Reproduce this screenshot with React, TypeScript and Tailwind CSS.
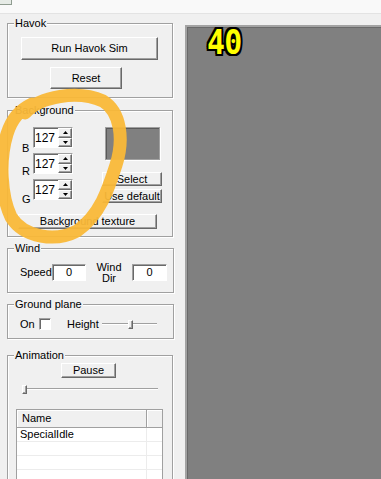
import React from "react";

const btn =
  "flex items-center justify-center border border-t-white border-l-white border-r-[#696969] border-b-[#696969] bg-[#f0f0f0] shadow-[inset_-1px_-1px_0_#a0a0a0] text-[11px] leading-none text-black";
const sunken =
  "border border-t-[#a0a0a0] border-l-[#a0a0a0] border-r-white border-b-white shadow-[inset_1px_1px_0_#696969] bg-white";

function Group({ label, className, children }: { label: string; className?: string; children: React.ReactNode }) {
  return (
    <div className={`relative border border-[#a0a0a0] shadow-[inset_1px_1px_0_#fff,1px_1px_0_#fff] ${className ?? ""}`}>
      <span className="absolute -top-[7px] left-[6px] bg-[#f0f0f0] px-[1px] leading-[13px]">{label}</span>
      {children}
    </div>
  );
}

function Arrow({ up }: { up?: boolean }) {
  return (
    <svg width="5" height="3" viewBox="0 0 5 3">
      <path d={up ? "M2.5 0 L5 3 L0 3 Z" : "M0 0 L5 0 L2.5 3 Z"} fill="#000" />
    </svg>
  );
}

function Spin({ label, drop, className }: { label: string; drop: string; className?: string }) {
  return (
    <div className={`flex items-end ${className ?? ""}`}>
      <span className={`w-[11px] leading-[13px] ${drop}`}>{label}</span>
      <div className={`flex h-[21px] w-[40px] ${sunken}`}>
        <div className="flex flex-1 items-center justify-end pr-[3px] text-[12px]">127</div>
        <div className="flex w-[14px] flex-col">
          <div className={`${btn} h-1/2`}>
            <Arrow up />
          </div>
          <div className={`${btn} h-1/2`}>
            <Arrow />
          </div>
        </div>
      </div>
    </div>
  );
}

function Slider({ width, thumb }: { width: string; thumb: string }) {
  return (
    <div className={`relative h-[9px] ${width}`}>
      <div className="absolute left-0 right-0 top-[3px] h-[2px] border-t border-[#a0a0a0] border-b border-b-white" />
      <div className={`absolute top-0 h-[9px] w-[5px] ${btn} ${thumb}`} />
    </div>
  );
}

export default function App() {
  return (
    <div className="relative h-[479px] w-[381px] overflow-hidden bg-[#f0f0f0] font-['Liberation_Sans',Arial,sans-serif] text-[11px] text-black">
      <div className="h-[14px] border-b border-[#e3e3e3] bg-[#f9f9f9]">
        <div className="h-[5px] w-[12px] border-b border-r border-[#8f9c90] bg-[#e6ebe6]" />
      </div>

      <div className="flex h-[465px]">
        <div className="flex w-[185px] flex-col pl-[7px]">
          <Group label="Havok" className="mt-[9px] w-[166px]">
            <div className="flex flex-col pb-[8px] pt-[13px]">
              <button className={`${btn} ml-[13px] h-[23px] w-[137px]`}>Run Havok Sim</button>
              <button className={`${btn} ml-[42px] mt-[7px] h-[22px] w-[72px]`}>Reset</button>
            </div>
          </Group>

          <Group label="Background" className="mt-[12px] w-[166px]">
            <div className="flex flex-col pb-[7px] pt-[16px]">
              <div className="flex">
                <div className="ml-[14px] flex flex-col">
                  <Spin label="B" drop="mb-[-7px]" />
                  <Spin label="R" drop="mb-[-4px]" className="mt-[5px]" />
                  <Spin label="G" drop="mb-[-6px]" className="mt-[5px]" />
                </div>
                <div className="ml-[29px] flex w-[60px] flex-col">
                  <div className="ml-[3px] h-[33px] w-[55px] border border-[#a0a0a0] bg-[#808080] shadow-[inset_1px_1px_0_#5a5a5a,1px_1px_0_#fff]" />
                  <button className={`${btn} mt-[12px] h-[14px] w-[60px]`}>Select</button>
                  <button className={`${btn} mt-[3px] h-[14px] w-[60px]`}>Use default</button>
                </div>
              </div>
              <button className={`${btn} ml-[10px] mt-[11px] h-[15px] w-[139px]`}>Background texture</button>
            </div>
          </Group>

          <Group label="Wind" className="mt-[11px] w-[167px]">
            <div className="mb-[11px] ml-[12px] mt-[15px] flex h-[17px] items-center">
              <span className="w-[32px]">Speed</span>
              <div className={`${sunken} flex h-[17px] w-[34px] items-center justify-center`}>0</div>
              <div className="flex h-[17px] w-[46px] flex-col items-center justify-center leading-[11px]">
                <span>Wind</span>
                <span>Dir</span>
              </div>
              <div className={`${sunken} flex h-[17px] w-[35px] items-center justify-center`}>0</div>
            </div>
          </Group>

          <Group label="Ground plane" className="mt-[11px] w-[167px]">
            <div className="mb-[8px] mt-[13px] flex h-[12px] items-center pl-[12px]">
              <span className="w-[19px]">On</span>
              <div className={`${sunken} h-[12px] w-[12px]`} />
              <span className="ml-[16px] w-[35px]">Height</span>
              <Slider width="w-[55px]" thumb="left-[26px]" />
            </div>
          </Group>

          <Group label="Animation" className="mt-[16px] h-[200px] w-[166px]">
            <div className="flex flex-col pt-[7px]">
              <button className={`${btn} ml-[53px] h-[15px] w-[55px]`}>Pause</button>
              <div className="ml-[14px] mt-[7px]">
                <Slider width="w-[136px]" thumb="left-0" />
              </div>
              <div className="ml-[8px] mt-[15px] w-[147px] border border-[#a0a0a0] bg-white">
                <div className="flex h-[18px] bg-[#f0f0f0]">
                  <div className="flex w-[130px] items-center border-b border-r border-[#a0a0a0] pl-[5px] shadow-[inset_1px_1px_0_#fff]">
                    Name
                  </div>
                  <div className="flex-1 border-b border-[#a0a0a0] shadow-[inset_1px_1px_0_#fff]" />
                </div>
                {["SpecialIdle", "", "", ""].map((n, i) => (
                  <div key={i} className="flex h-[14px] border-b border-[#ececec]">
                    <div className="flex w-[130px] items-center border-r border-[#ececec] pl-[3px]">{n}</div>
                  </div>
                ))}
              </div>
            </div>
          </Group>
        </div>

        <div className="mt-[11px] flex-1 border-l-2 border-t-2 border-[#a3a3a3] bg-[#808080] pl-[20px] pt-[1px] shadow-[inset_1px_1px_0_#6a6a6a]">
          <div className="origin-left scale-x-[0.88] font-['DejaVu_Sans_Mono',monospace] text-[34px] font-bold leading-[28px] tracking-[-1px] text-[#ffff00] [text-shadow:2px_0_0_#000,-2px_0_0_#000,0_2px_0_#000,0_-2px_0_#000,2px_2px_0_#000,-2px_-2px_0_#000,2px_-2px_0_#000,-2px_2px_0_#000]">
            40
          </div>
        </div>
      </div>

      <svg className="pointer-events-none absolute left-0 top-0" width="381" height="479">
        <path
          d="M25 113 C40 96, 78 90, 103 101 C121 112, 124 140, 116 165 C108 190, 100 215, 77 231 C56 242, 24 238, 11 217 C1 196, -1 160, 7 134 C12 118, 20 110, 32 104"
          fill="none"
          stroke="#f9b838"
          strokeWidth="13"
          strokeLinecap="round"
          strokeOpacity="0.95"
        />
      </svg>
    </div>
  );
}
